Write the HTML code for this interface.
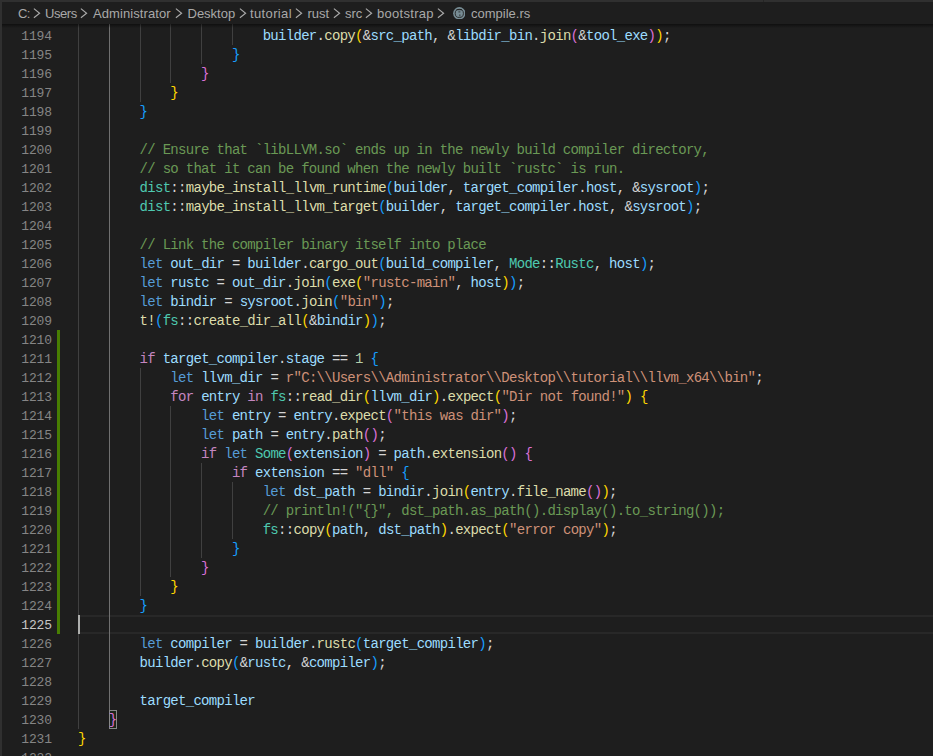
<!DOCTYPE html>
<html><head><meta charset="utf-8"><style>
html,body{margin:0;padding:0;}
body{width:933px;height:756px;overflow:hidden;background:#1e1e1e;position:relative;}
#topb{position:absolute;left:0;top:0;width:933px;height:2px;background:#303030;}
#leftb{position:absolute;left:0;top:0;width:2px;height:756px;background:#303030;}#notch{position:absolute;left:763px;top:0;width:1px;height:2px;background:#262626;}
#bc{position:absolute;left:2px;top:2px;width:931px;height:22px;background:#1e1e1e;font-family:"Liberation Sans",sans-serif;font-size:13px;color:#a9a9a9;}
#bc span{position:absolute;top:4px;white-space:nowrap;}
#bc svg{position:absolute;}
#shadow{position:absolute;left:2px;top:24px;width:931px;height:4px;background:linear-gradient(rgba(0,0,0,0.5),rgba(0,0,0,0));}
.ln{position:absolute;left:2px;width:50px;text-align:right;height:19px;line-height:21px;font-family:"Liberation Mono",monospace;font-size:13px;letter-spacing:-0.105px;color:#858585;}
.ln.act{color:#c6c6c6;}
.cl{position:absolute;height:19px;line-height:21px;white-space:pre;font-family:"Liberation Mono",monospace;font-size:14px;letter-spacing:-0.706px;color:#d4d4d4;}
i{font-style:normal;}
.k{color:#569cd6}.c{color:#c586c0}.f{color:#dcdcaa}.v{color:#9cdcfe}.t{color:#4ec9b0}.s{color:#ce9178}.n{color:#b5cea8}.m{color:#6a9955}
.b1{color:#ffd700}.b2{color:#da70d6}.b3{color:#179fff}
.g{position:absolute;width:1px;background:#404040;}
.g.act{background:#707070;}
#git{position:absolute;left:57px;top:330px;width:3px;height:304px;background:#487e02;}
#curline{position:absolute;left:80px;top:615px;width:853px;height:15px;border-top:2px solid #282828;border-bottom:2px solid #282828;}
#cursor{position:absolute;left:78px;top:615px;width:2px;height:19px;background:#aeafad;}
#bm{position:absolute;left:109px;top:710px;width:6px;height:17px;border:1px solid #888888;background:#0064001a;}
</style></head><body>
<div id="topb"></div><div id="notch"></div><div id="leftb"></div>
<div id="curline"></div>
<div class="g" style="left:78px;top:24px;height:705px"></div>
<div class="g act" style="left:109px;top:24px;height:686px"></div>
<div class="g" style="left:140px;top:24px;height:78px"></div>
<div class="g" style="left:170px;top:24px;height:59px"></div>
<div class="g" style="left:201px;top:24px;height:40px"></div>
<div class="g" style="left:232px;top:24px;height:21px"></div>
<div class="g" style="left:140px;top:368px;height:228px"></div>
<div class="g" style="left:170px;top:406px;height:171px"></div>
<div class="g" style="left:201px;top:463px;height:95px"></div>
<div class="g" style="left:232px;top:482px;height:57px"></div>
<div id="bm"></div>
<div class="ln" style="top:26px">1194</div>
<div class="cl" style="top:26px;left:262.680px"><i class="v">builder</i>.<i class="f">copy</i><i class="b1">(</i>&amp;<i class="v">src_path</i>, &amp;<i class="v">libdir_bin</i>.<i class="f">join</i><i class="b2">(</i>&amp;<i class="v">tool_exe</i><i class="b2">)</i><i class="b1">)</i>;</div>
<div class="ln" style="top:45px">1195</div>
<div class="cl" style="top:45px;left:231.900px"><i class="b3">&#125;</i></div>
<div class="ln" style="top:64px">1196</div>
<div class="cl" style="top:64px;left:201.120px"><i class="b2">&#125;</i></div>
<div class="ln" style="top:83px">1197</div>
<div class="cl" style="top:83px;left:170.340px"><i class="b1">&#125;</i></div>
<div class="ln" style="top:102px">1198</div>
<div class="cl" style="top:102px;left:139.560px"><i class="b3">&#125;</i></div>
<div class="ln" style="top:121px">1199</div>
<div class="ln" style="top:140px">1200</div>
<div class="cl" style="top:140px;left:139.560px"><i class="m">// Ensure that `libLLVM.so` ends up in the newly build compiler directory,</i></div>
<div class="ln" style="top:159px">1201</div>
<div class="cl" style="top:159px;left:139.560px"><i class="m">// so that it can be found when the newly built `rustc` is run.</i></div>
<div class="ln" style="top:178px">1202</div>
<div class="cl" style="top:178px;left:139.560px"><i class="t">dist</i>::<i class="f">maybe_install_llvm_runtime</i><i class="b3">(</i><i class="v">builder</i>, <i class="v">target_compiler</i>.<i class="v">host</i>, &amp;<i class="v">sysroot</i><i class="b3">)</i>;</div>
<div class="ln" style="top:197px">1203</div>
<div class="cl" style="top:197px;left:139.560px"><i class="t">dist</i>::<i class="f">maybe_install_llvm_target</i><i class="b3">(</i><i class="v">builder</i>, <i class="v">target_compiler</i>.<i class="v">host</i>, &amp;<i class="v">sysroot</i><i class="b3">)</i>;</div>
<div class="ln" style="top:216px">1204</div>
<div class="ln" style="top:235px">1205</div>
<div class="cl" style="top:235px;left:139.560px"><i class="m">// Link the compiler binary itself into place</i></div>
<div class="ln" style="top:254px">1206</div>
<div class="cl" style="top:254px;left:139.560px"><i class="k">let</i> <i class="v">out_dir</i> = <i class="v">builder</i>.<i class="f">cargo_out</i><i class="b3">(</i><i class="v">build_compiler</i>, <i class="t">Mode</i>::<i class="t">Rustc</i>, <i class="v">host</i><i class="b3">)</i>;</div>
<div class="ln" style="top:273px">1207</div>
<div class="cl" style="top:273px;left:139.560px"><i class="k">let</i> <i class="v">rustc</i> = <i class="v">out_dir</i>.<i class="f">join</i><i class="b3">(</i><i class="f">exe</i><i class="b1">(</i><i class="s">"rustc-main"</i>, <i class="v">host</i><i class="b1">)</i><i class="b3">)</i>;</div>
<div class="ln" style="top:292px">1208</div>
<div class="cl" style="top:292px;left:139.560px"><i class="k">let</i> <i class="v">bindir</i> = <i class="v">sysroot</i>.<i class="f">join</i><i class="b3">(</i><i class="s">"bin"</i><i class="b3">)</i>;</div>
<div class="ln" style="top:311px">1209</div>
<div class="cl" style="top:311px;left:139.560px"><i class="f">t!</i><i class="b3">(</i><i class="t">fs</i>::<i class="f">create_dir_all</i><i class="b1">(</i>&amp;<i class="v">bindir</i><i class="b1">)</i><i class="b3">)</i>;</div>
<div class="ln" style="top:330px">1210</div>
<div class="ln" style="top:349px">1211</div>
<div class="cl" style="top:349px;left:139.560px"><i class="c">if</i> <i class="v">target_compiler</i>.<i class="v">stage</i> == <i class="n">1</i> <i class="b3">&#123;</i></div>
<div class="ln" style="top:368px">1212</div>
<div class="cl" style="top:368px;left:170.340px"><i class="k">let</i> <i class="v">llvm_dir</i> = <i class="s">r"C:\\Users\\Administrator\\Desktop\\tutorial\\llvm_x64\\bin"</i>;</div>
<div class="ln" style="top:387px">1213</div>
<div class="cl" style="top:387px;left:170.340px"><i class="c">for</i> <i class="v">entry</i> <i class="c">in</i> <i class="t">fs</i>::<i class="f">read_dir</i><i class="b1">(</i><i class="v">llvm_dir</i><i class="b1">)</i>.<i class="f">expect</i><i class="b1">(</i><i class="s">"Dir not found!"</i><i class="b1">)</i> <i class="b1">&#123;</i></div>
<div class="ln" style="top:406px">1214</div>
<div class="cl" style="top:406px;left:201.120px"><i class="k">let</i> <i class="v">entry</i> = <i class="v">entry</i>.<i class="f">expect</i><i class="b2">(</i><i class="s">"this was dir"</i><i class="b2">)</i>;</div>
<div class="ln" style="top:425px">1215</div>
<div class="cl" style="top:425px;left:201.120px"><i class="k">let</i> <i class="v">path</i> = <i class="v">entry</i>.<i class="f">path</i><i class="b2">()</i>;</div>
<div class="ln" style="top:444px">1216</div>
<div class="cl" style="top:444px;left:201.120px"><i class="c">if</i> <i class="k">let</i> <i class="t">Some</i><i class="b2">(</i><i class="v">extension</i><i class="b2">)</i> = <i class="v">path</i>.<i class="f">extension</i><i class="b2">()</i> <i class="b2">&#123;</i></div>
<div class="ln" style="top:463px">1217</div>
<div class="cl" style="top:463px;left:231.900px"><i class="c">if</i> <i class="v">extension</i> == <i class="s">"dll"</i> <i class="b3">&#123;</i></div>
<div class="ln" style="top:482px">1218</div>
<div class="cl" style="top:482px;left:262.680px"><i class="k">let</i> <i class="v">dst_path</i> = <i class="v">bindir</i>.<i class="f">join</i><i class="b1">(</i><i class="v">entry</i>.<i class="f">file_name</i><i class="b2">()</i><i class="b1">)</i>;</div>
<div class="ln" style="top:501px">1219</div>
<div class="cl" style="top:501px;left:262.680px"><i class="m">// println!("&#123;&#125;", dst_path.as_path().display().to_string());</i></div>
<div class="ln" style="top:520px">1220</div>
<div class="cl" style="top:520px;left:262.680px"><i class="t">fs</i>::<i class="f">copy</i><i class="b1">(</i><i class="v">path</i>, <i class="v">dst_path</i><i class="b1">)</i>.<i class="f">expect</i><i class="b1">(</i><i class="s">"error copy"</i><i class="b1">)</i>;</div>
<div class="ln" style="top:539px">1221</div>
<div class="cl" style="top:539px;left:231.900px"><i class="b3">&#125;</i></div>
<div class="ln" style="top:558px">1222</div>
<div class="cl" style="top:558px;left:201.120px"><i class="b2">&#125;</i></div>
<div class="ln" style="top:577px">1223</div>
<div class="cl" style="top:577px;left:170.340px"><i class="b1">&#125;</i></div>
<div class="ln" style="top:596px">1224</div>
<div class="cl" style="top:596px;left:139.560px"><i class="b3">&#125;</i></div>
<div class="ln act" style="top:615px">1225</div>
<div class="ln" style="top:634px">1226</div>
<div class="cl" style="top:634px;left:139.560px"><i class="k">let</i> <i class="v">compiler</i> = <i class="v">builder</i>.<i class="f">rustc</i><i class="b3">(</i><i class="v">target_compiler</i><i class="b3">)</i>;</div>
<div class="ln" style="top:653px">1227</div>
<div class="cl" style="top:653px;left:139.560px"><i class="v">builder</i>.<i class="f">copy</i><i class="b3">(</i>&amp;<i class="v">rustc</i>, &amp;<i class="v">compiler</i><i class="b3">)</i>;</div>
<div class="ln" style="top:672px">1228</div>
<div class="ln" style="top:691px">1229</div>
<div class="cl" style="top:691px;left:139.560px"><i class="v">target_compiler</i></div>
<div class="ln" style="top:710px">1230</div>
<div class="cl" style="top:710px;left:108.780px"><i class="b2">&#125;</i></div>
<div class="ln" style="top:729px">1231</div>
<div class="cl" style="top:729px;left:78.000px"><i class="b1">&#125;</i></div>
<div class="ln" style="top:748px">1232</div>
<div id="git"></div>
<div id="cursor"></div>
<div id="bc"><span style="left:16.0px;letter-spacing:-0.70px">C:</span>
<span style="left:43.0px;letter-spacing:-0.45px">Users</span>
<span style="left:91.0px;letter-spacing:0.08px">Administrator</span>
<span style="left:185.5px;letter-spacing:0.00px">Desktop</span>
<span style="left:248.0px;letter-spacing:0.37px">tutorial</span>
<span style="left:305.5px;letter-spacing:0.00px">rust</span>
<span style="left:343.0px;letter-spacing:0.00px">src</span>
<span style="left:375.0px;letter-spacing:0.30px">bootstrap</span>
<span style="left:469.0px;letter-spacing:0.00px">compile.rs</span>
<svg style="left:30.9px;top:6.1px" width="8" height="12" viewBox="0 0 8 12"><path d="M0.9 0.6 L6.6 5.2 L0.9 9.8" fill="none" stroke="#a9a9a9" stroke-width="1.15"/></svg>
<svg style="left:78.2px;top:6.1px" width="8" height="12" viewBox="0 0 8 12"><path d="M0.9 0.6 L6.6 5.2 L0.9 9.8" fill="none" stroke="#a9a9a9" stroke-width="1.15"/></svg>
<svg style="left:172.7px;top:6.1px" width="8" height="12" viewBox="0 0 8 12"><path d="M0.9 0.6 L6.6 5.2 L0.9 9.8" fill="none" stroke="#a9a9a9" stroke-width="1.15"/></svg>
<svg style="left:236.7px;top:6.1px" width="8" height="12" viewBox="0 0 8 12"><path d="M0.9 0.6 L6.6 5.2 L0.9 9.8" fill="none" stroke="#a9a9a9" stroke-width="1.15"/></svg>
<svg style="left:293.4px;top:6.1px" width="8" height="12" viewBox="0 0 8 12"><path d="M0.9 0.6 L6.6 5.2 L0.9 9.8" fill="none" stroke="#a9a9a9" stroke-width="1.15"/></svg>
<svg style="left:331.0px;top:6.1px" width="8" height="12" viewBox="0 0 8 12"><path d="M0.9 0.6 L6.6 5.2 L0.9 9.8" fill="none" stroke="#a9a9a9" stroke-width="1.15"/></svg>
<svg style="left:363.1px;top:6.1px" width="8" height="12" viewBox="0 0 8 12"><path d="M0.9 0.6 L6.6 5.2 L0.9 9.8" fill="none" stroke="#a9a9a9" stroke-width="1.15"/></svg>
<svg style="left:434.9px;top:6.1px" width="8" height="12" viewBox="0 0 8 12"><path d="M0.9 0.6 L6.6 5.2 L0.9 9.8" fill="none" stroke="#a9a9a9" stroke-width="1.15"/></svg>
<svg style="left:450.5px;top:4.7px" width="12.6" height="12.6" viewBox="0 0 12.6 12.6"><circle cx="6.3" cy="6.3" r="6.2" fill="#778c94"/><circle cx="6.3" cy="6.4" r="4.1" fill="none" stroke="#1e1e1e" stroke-width="1.0" opacity="0.85"/><path d="M3.6 2.7 H9" stroke="#1e1e1e" stroke-width="0.9"/><rect x="5.4" y="4.4" width="2" height="1" fill="#1e1e1e" opacity="0.75"/><rect x="6.3" y="7.4" width="1.1" height="2" fill="#1e1e1e" opacity="0.7"/></svg></div>
<div id="shadow"></div>
</body></html>
